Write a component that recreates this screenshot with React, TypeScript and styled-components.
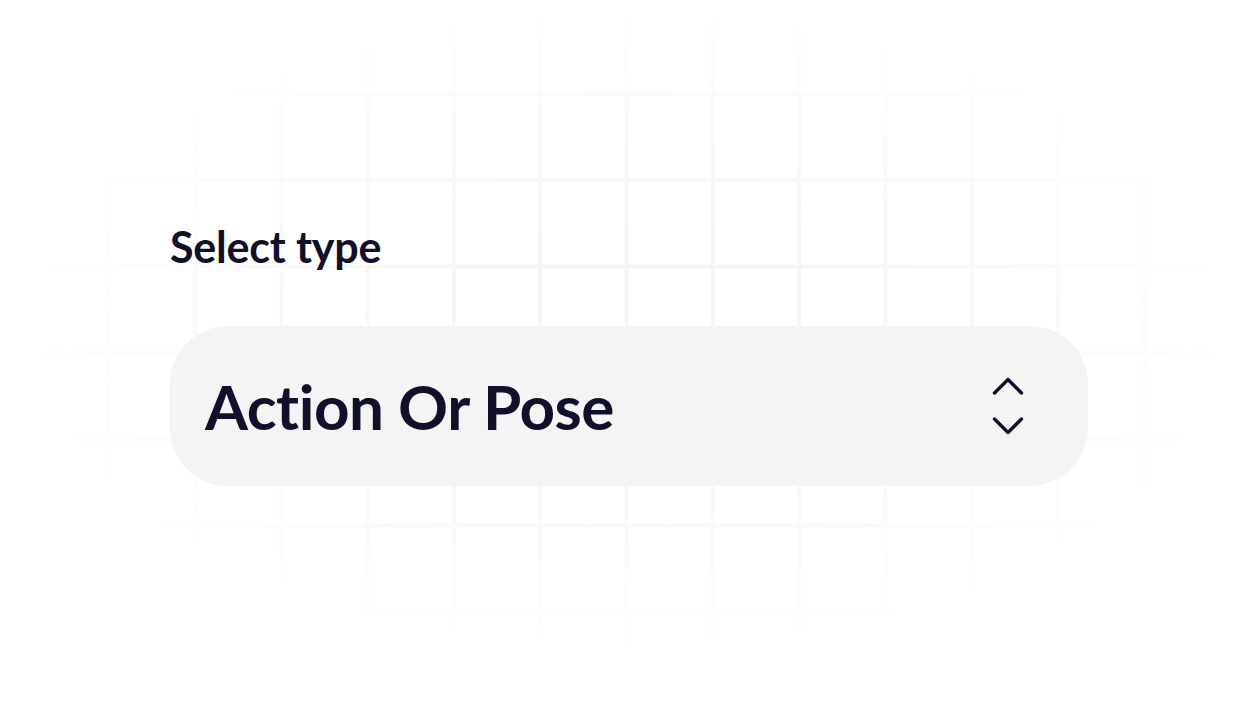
import React from "react";
import styled, { createGlobalStyle } from "styled-components";

const GlobalStyle = createGlobalStyle`
  html, body { margin: 0; padding: 0; background: #ffffff; }
  body { font-family: "Lato", "Inter", sans-serif; }
`;

const Page = styled.div`
  position: relative;
  width: 1256px;
  height: 707px;
  overflow: hidden;
  background: #ffffff;
`;

const Grid = styled.div`
  position: absolute;
  inset: 0;
  background-image:
    linear-gradient(to right, #f5f5f6 4px, transparent 4px),
    linear-gradient(to bottom, #f5f5f6 4px, transparent 4px);
  background-size: 86.3px 86.3px;
  background-position: 20.5px 5.7px;
  -webkit-mask-image: radial-gradient(ellipse 610px 325px at 628px 330px, #000 30%, rgba(0,0,0,0.5) 70%, transparent 100%);
  mask-image: radial-gradient(ellipse 610px 325px at 628px 330px, #000 30%, rgba(0,0,0,0.5) 70%, transparent 100%);
`;

const Content = styled.div`
  position: relative;
  display: flex;
  flex-direction: column;
  gap: 54px;
  padding: 222px 0 0 170px;
  width: 918px;
`;

const Label = styled.label`
  font-family: "Lato", sans-serif;
  font-weight: 700;
  font-size: 43px;
  line-height: 50px;
  color: #10102a;
  letter-spacing: -0.2px;
`;

const SelectBox = styled.div`
  display: flex;
  align-items: center;
  justify-content: space-between;
  height: 160px;
  padding: 0 62px 0 35px;
  border-radius: 58px;
  background: #f4f4f5;
`;

const Value = styled.span`
  font-family: "Lato", sans-serif;
  font-weight: 700;
  font-size: 62px;
  color: #10102a;
  letter-spacing: -0.5px;
`;

const Chevrons = styled.svg`
  width: 36px;
  height: 62px;
  color: #10102a;
`;

export default function App() {
  return (
    <Page>
      <GlobalStyle />
      <Grid />
      <Content>
        <Label>Select type</Label>
        <SelectBox>
          <Value>Action Or Pose</Value>
          <Chevrons viewBox="0 0 36 62" fill="none" stroke="currentColor" strokeWidth="3.4" strokeLinecap="round" strokeLinejoin="round">
            <path d="M4.5 18 L18 4.5 L31.5 18" />
            <path d="M4.5 44 L18 57.5 L31.5 44" />
          </Chevrons>
        </SelectBox>
      </Content>
    </Page>
  );
}
